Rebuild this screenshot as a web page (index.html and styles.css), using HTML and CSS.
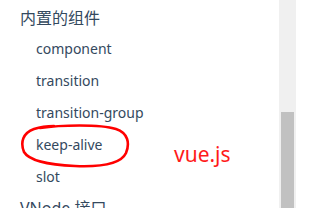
FILE: index.html
```html
<!DOCTYPE html>
<html lang="zh-CN">
<head>
	<meta charset="UTF-8">
	<title>内置的组件</title>
	<link rel="stylesheet" href="styles.css">
</head>
<body>
	<div class="page">
		<div class="sidebar">
			<ul class="menu">
				<li class="menu-title">内置的组件</li>
				<li class="menu-item">component</li>
				<li class="menu-item">transition</li>
				<li class="menu-item">transition-group</li>
				<li class="menu-item">keep-alive</li>
				<li class="menu-item">slot</li>
				<li class="menu-title">VNode 接口</li>
			</ul>
			<svg class="circle" width="112" height="46" viewBox="0 0 112 46">
				<path d="M20 4 C40 1 80 0 96 5 C108 9 110 19 106 29 C101 40 80 43 55 42 C32 41 10 38 4 28 C0 18 3 9 14 5 C20 3 28 2 34 2" fill="none" stroke="#f00" stroke-width="2.6" stroke-linecap="round"/>
			</svg>
			<span class="note">vue.js</span>
		</div>
		<div class="scroll-track">
			<div class="scroll-thumb"></div>
		</div>
	</div>
</body>
</html>
```
FILE: styles.css
```css
*{
	margin: 0;
	padding: 0;
}
body{
	background: #fff;
	font-family: "Noto Sans", "Noto Sans CJK SC", sans-serif;
	color: #34495e;
	overflow: hidden;
}
.page{
	display: flex;
	height: 208px;
}
.sidebar{
	width: 279px;
	position: relative;
	overflow: hidden;
}
.menu{
	padding-top: 3px;
}
li{
	list-style: none;
}
.menu-title{
	padding-left: 20px;
	font-size: 16px;
	line-height: 30px;
	height: 30px;
}
.menu-item{
	padding-left: 36px;
	font-size: 14px;
	line-height: 32px;
	height: 32px;
}
.circle{
	position: absolute;
	left: 20px;
	top: 124px;
}
.note{
	position: absolute;
	left: 174px;
	top: 140px;
	font-size: 21px;
	color: #ff1a1a;
}
.scroll-track{
	width: 17px;
	background: #f0f0f0;
	padding: 112px 2px 0 2px;
	box-sizing: border-box;
}
.scroll-thumb{
	height: 100%;
	background: #c1c1c1;
}
```
